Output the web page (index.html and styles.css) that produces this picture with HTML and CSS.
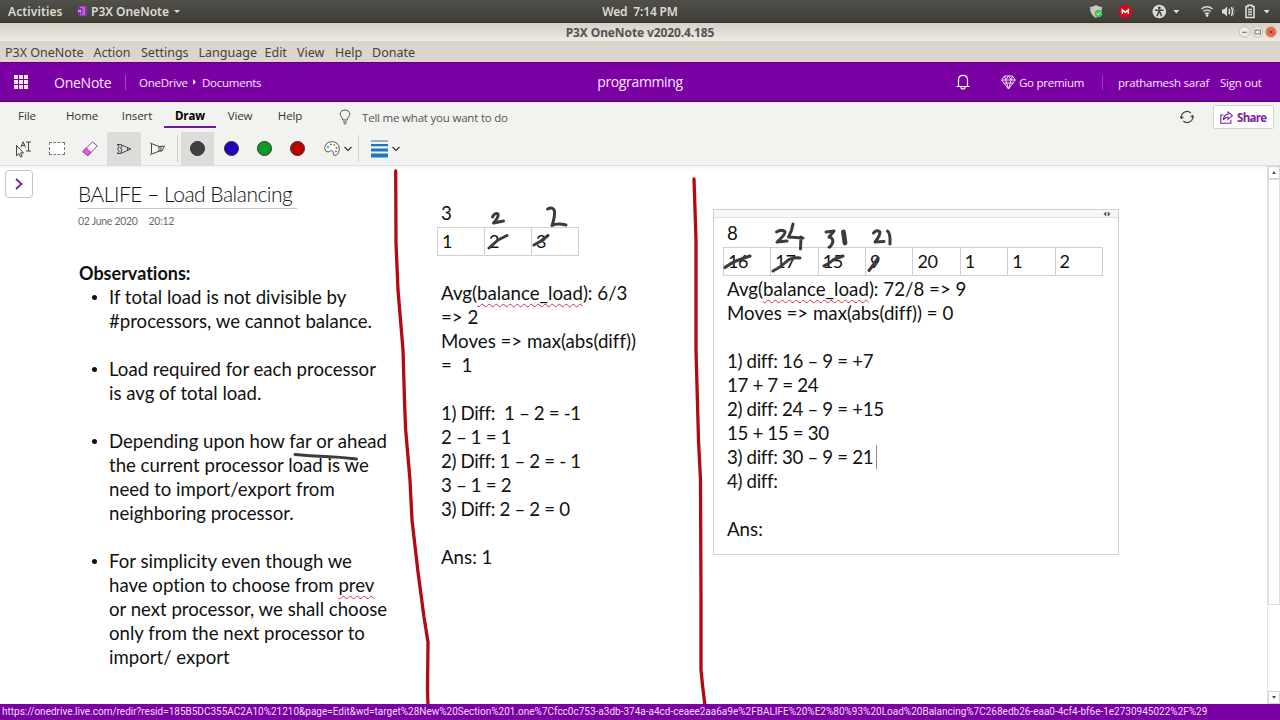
FILE: index.html
```html
<!doctype html>
<html lang="en">
  <head>
    <meta charset="UTF-8" />
    <meta name="viewport" content="width=device-width, initial-scale=1.0" />
    <title>P3X OneNote v2020.4.185</title>
    <link rel="stylesheet" href="styles.css">
  </head>
  <body>
    <!-- Desktop bar -->
    <div class="topbar">
      <div class="topbar-left">
        <span class="activities">Activities</span>
        <svg class="app-icon" width="10" height="10" viewBox="0 0 10 10">
          <rect x="2.5" y="0.5" width="7" height="9" rx="1" fill="#c95be8" />
          <path d="M8 .5h1.5v9H8z" fill="#8a2bb8" />
          <rect x="0" y="2.3" width="5.5" height="5.5" rx=".6" fill="#7c1fae" />
          <path d="M1.7 6.5V3.7l2 2.8V3.7" fill="none" stroke="#e9c8f5" stroke-width=".8" />
        </svg>
        <span class="app-name">P3X OneNote</span>
        <i class="caret"></i>
      </div>
      <div class="clock">Wed&nbsp; 7:14 PM</div>
      <div class="tray">
        <svg width="191" height="22" viewBox="1089 0 191 22">
          <path d="M1096 5q-3 2-6 2 0 8 6 11 6-3 6-11-3 0-6-2z" fill="#c9c9c4" />
          <circle cx="1098.500" cy="13.500" r="3.800" fill="#3fc455" />
          <path d="M1096.700 13.600l1.400 1.300 2.300-2.500" fill="none" stroke="#fff" />
          <circle cx="1125.300" cy="11.500" r="6.800" fill="#d9061c" />
          <path d="M1122.300 13.800v-4l3 2.600 3-2.600v4" fill="none" stroke="#fff" stroke-width="1.500" />
          <circle cx="1159.300" cy="11.500" r="6.800" fill="#dedcd7" />
          <circle cx="1159.300" cy="7.800" r="1.400" fill="#3f3e39" />
          <path d="M1155 10.200h8.600M1159.300 10v3.200M1157 16.200l1.500-4h1.600l1.500 4" fill="none" stroke="#3f3e39" stroke-width="1.400" />
          <path d="M1173.300 10h6l-3 3.500zM1263.700 10h6l-3 3.500z" fill="#dedcd7" />
          <g fill="none" stroke="#dedcd7" stroke-width="1.500">
            <path d="M1201.500 9q5.500-4.500 11 0" />
            <path d="M1203.300 11.500q3.700-3 7.400 0" />
            <path d="M1205 13.700q2-1.600 4 0" />
            <path d="M1229 8.700q1.300 2.800 0 5.600M1231.300 7.200q2.400 4.300 0 8.600" />
          </g>
          <circle cx="1207" cy="15.500" r="1.400" fill="#dedcd7" />
          <path d="M1222 9.500h2l3-3v10l-3-3h-2z" fill="#dedcd7" />
          <path d="M1233 6.500q2.500 5 0 10" fill="none" stroke="#8c8b86" />
          <path d="M1246 6.500h2v-1.300h4v1.300h2v11h-8z" fill="none" stroke="#dedcd7" stroke-width="1.600" />
          <path d="M1248 9.500h4M1248 12h4M1248 14.500h4" stroke="#dedcd7" stroke-width="1.500" />
        </svg>
      </div>
    </div>

    <!-- Window title and menu -->
    <div class="titlebar">
      <span class="window-title">P3X OneNote v2020.4.185</span>
      <svg class="window-buttons" width="40" height="14" viewBox="0 0 40 14">
        <circle cx="6.500" cy="7" r="5.300" fill="#eeeae4" stroke="#c9c3ba" />
        <circle cx="19.500" cy="7" r="5.300" fill="#eeeae4" stroke="#c9c3ba" />
        <circle cx="33" cy="7" r="5" fill="#ec6e4c" stroke="#d4735a" />
        <path d="M4 7.300h5M17 5h5.500v4H17z" fill="none" stroke="#77716a" />
        <path d="M31.300 5.300l3.400 3.400M34.700 5.300l-3.400 3.400" stroke="#7c3424" />
      </svg>
    </div>
    <div class="menubar">
      <span>P3X OneNote</span>
      <span>Action</span>
      <span>Settings</span>
      <span>Language</span>
      <span>Edit</span>
      <span>View</span>
      <span>Help</span>
      <span>Donate</span>
    </div>

    <!-- OneNote header -->
    <div class="header">
      <div class="header-left">
        <div class="waffle">
          <i></i><i></i><i></i><i></i><i></i><i></i><i></i><i></i><i></i>
        </div>
        <span class="brand">OneNote</span>
        <span class="crumb">OneDrive</span>
        <i class="crumb-arrow"></i>
        <span>Documents</span>
      </div>
      <div class="notebook">programming</div>
      <div class="header-right">
        <svg class="bell" width="14" height="16" viewBox="0 0 14 16" fill="none" stroke="#fff" stroke-width="1.200">
          <path d="M2.500 12V6q0-4.700 4.500-4.700T11.500 6v6M.6 12.500h12.800M5 13q0 2 2 2t2-2" />
        </svg>
        <svg class="gem" width="15" height="15" viewBox="0 0 15 15" fill="none" stroke="#f3dcfb">
          <path d="M3.500 1h8L14.300 5 7.500 14 .7 5zM.7 5h13.600M3.500 1l1.300 4 2.700 9 2.700-9 1.300-4M4.800 5l2.700-4 2.700 4M2.500 8h10" />
        </svg>
        <span class="premium">Go premium</span>
        <span class="user">prathamesh saraf</span>
        <span class="sign-out">Sign out</span>
      </div>
    </div>

    <!-- Ribbon -->
    <div class="ribbon">
      <div class="tabs">
        <span class="tab">File</span>
        <span class="tab">Home</span>
        <span class="tab">Insert</span>
        <span class="tab active">Draw</span>
        <span class="tab">View</span>
        <span class="tab help">Help</span>
        <svg class="bulb" width="12" height="16" viewBox="0 0 12 16" fill="none" stroke="#555">
          <path d="M3.800 11q0-1.700-1.300-3.100Q1.200 6.600 1.200 5.300 1.500 1 6 1t4.800 4.300q0 1.300-1.300 2.600Q8.200 9.300 8.200 11zM4 13h4M4.800 14.800h2.400" />
        </svg>
        <span class="tell-me">Tell me what you want to do</span>
        <svg class="sync" width="14" height="14" viewBox="0 0 14 14" fill="none" stroke="#444" stroke-width="1.100">
          <path d="M1.500 8.200A5.600 5.600 0 0 1 10.800 3M12.600 5.800A5.600 5.600 0 0 1 3.300 11M0 6.500l1.500 2 2-1.600M14 7.500l-1.500-2-2 1.600" />
        </svg>
        <div class="share">
          <svg width="13" height="13" viewBox="0 0 13 13" fill="none" stroke="#7a1fa2" stroke-width="1.100">
            <path d="M3.500 4H.8v8.300h10V9M8 1l4.300 3.700L8 8.300V6.200Q4.800 6 3.300 9 3.500 3.700 8 3.200z" />
          </svg>
          <span>Share</span>
        </div>
      </div>
      <div class="tools">
        <span class="tool">
          <svg width="17" height="18" viewBox="0 0 17 18" fill="none" stroke="#444">
            <path d="M1.500 5.500v10.300l2.400-2.200L5.500 17l1.700-.8-1.600-3.300h3zM5.800 7.500l2.400-5.700 2.300 5.700M6.700 5.500h3M11 2h5M13.500 2v9M11 11h5" />
          </svg>
        </span>
        <span class="tool"><i class="lasso"></i></span>
        <span class="tool">
          <svg width="16" height="16" viewBox="0 0 16 16" fill="#fff" stroke="#b02fc0">
            <path d="M.8 10.500L10.500 1l4.700 3.800L6 14.800z" />
            <path d="M.8 10.500l3.500-3.400L9 11.500l-3 3.300z" fill="#dc62dc" />
          </svg>
        </span>
        <span class="tool active">
          <svg width="16" height="12" viewBox="0 0 16 12" fill="none" stroke="#444">
            <path d="M1 1.500h3.500L14.800 6 4.500 10.500H1l2.200-2L1.700 6l1.500-2.500zM4.500 1.500l1.700 2L4 5.300l2 1.200-1.500 4M11.500 4.500v3" />
          </svg>
        </span>
        <span class="tool">
          <svg width="17" height="14" viewBox="0 0 17 14" fill="none" stroke="#444">
            <path d="M1 .7q1 0 1.500 1.300v9.700Q2 13 1 13M2.500 1.500l7.500 3v4.700l-7.500 3M10 4.500l5.500-.3L13 9l-3 .2M12.200 4.500L11.700 9" />
          </svg>
        </span>
        <i class="divider"></i>
        <span class="tool active"><i class="dot"></i></span>
        <span class="tool"><i class="dot blue"></i></span>
        <span class="tool"><i class="dot green"></i></span>
        <span class="tool"><i class="dot red"></i></span>
        <svg class="palette" width="16" height="15" viewBox="0 0 16 15" fill="none">
          <path d="M7.500.7Q14.800 1 15.200 7q0 6-3.200 7.200-3 .6-2.700-1.500Q9.500 9 6.500 9.800 4 12 2 10.300.5 8.700.8 6.500 2 .8 7.500.7z" fill="#fff" stroke="#555" />
          <circle cx="4" cy="6" r="1" fill="#2f7ed0" />
          <circle cx="6.800" cy="3.500" r="1" fill="#25a05a" />
          <circle cx="10.300" cy="4" r="1" fill="#d98425" />
          <circle cx="12.500" cy="7" r="1" fill="#d24b4b" />
          <circle cx="12" cy="10.500" r="1" fill="#8945b0" />
        </svg>
        <svg class="chevron" width="8" height="6" viewBox="0 0 8 6"><path d="M.5 1L4 4.500 7.500 1" fill="none" stroke="#333" stroke-width="1.100" /></svg>
        <i class="divider wide"></i>
        <svg class="weights" width="17" height="18" viewBox="0 0 17 18" fill="#2176c4">
          <path d="M0 .5h17v1H0zM0 4h17v2.200H0zM0 8.500h17v3H0zM0 13.500h17v4H0z" />
        </svg>
        <svg class="chevron" width="8" height="6" viewBox="0 0 8 6"><path d="M.5 1L4 4.500 7.500 1" fill="none" stroke="#333" stroke-width="1.100" /></svg>
      </div>
    </div>

    <!-- Page canvas -->
    <div class="canvas">
      <div class="nav-toggle">
        <svg width="8" height="12" viewBox="0 0 8 12"><path d="M1 1l5.500 5L1 11" fill="none" stroke="#6d1a9c" stroke-width="1.700" /></svg>
      </div>

      <div class="note page-title">
        <h1>BALIFE – Load Balancing</h1>
        <p><span>02 June 2020</span><span>20:12</span></p>
      </div>

      <div class="note observations">
        <h2>Observations:</h2>
        <ul>
          <li>If total load is not divisible by<br />#processors, we cannot balance.</li>
          <li>Load required for each processor<br />is avg of total load.</li>
          <li>Depending upon how far or ahead<br />the current processor load is we<br />need to import/export from<br />neighboring processor.</li>
          <li>For simplicity even though we<br />have option to choose from <u>prev</u><br />or next processor, we shall choose<br />only from the next processor to<br />import/ export</li>
        </ul>
      </div>

      <div class="note example-one">
        <p>3</p>
        <table>
          <tr><td>1</td><td>2</td><td>3</td></tr>
        </table>
        <p class="calc">Avg(<u>balance_load</u>): 6/3<br />=&gt; 2<br />Moves =&gt; max(abs(diff))<br />=&nbsp; 1</p>
        <p class="sums">1) Diff:&nbsp; 1 – 2 = -1<br />2 – 1 = 1<br />2) Diff: 1 – 2 = - 1<br />3 – 1 = 2<br />3) Diff: 2 – 2 = 0</p>
        <p>Ans: 1</p>
      </div>

      <div class="note example-two">
        <div class="note-handle">
          <svg width="8" height="6" viewBox="0 0 8 6"><path d="M3.300.5v5L.5 3zM4.700.5v5L7.500 3z" fill="#555" /></svg>
        </div>
        <p class="count">8</p>
        <table>
          <tr><td>16</td><td>17</td><td>15</td><td>9</td><td>20</td><td>1</td><td>1</td><td>2</td></tr>
        </table>
        <p>Avg(<u>balance_load</u>): 72/8 =&gt; 9<br />Moves =&gt; max(abs(diff)) = 0</p>
        <p class="sums">1) diff: 16 – 9 = +7<br />17 + 7 = 24<br />2) diff: 24 – 9 = +15<br />15 + 15 = 30<br />3) diff: 30 – 9 = 21<i class="cursor"></i><br />4) diff:</p>
        <p>Ans:</p>
      </div>

      <!-- Pen strokes -->
      <svg class="ink" width="1280" height="539" viewBox="0 165 1280 539">
        <g class="ink-red">
          <path d="M395.700 171L396 243 398 290 403 350 404.500 400 405.500 428 410 480 412 520 418 572 424 617 428 642 427.500 690 428 706" />
          <path d="M694 179L696 240 696 350 698.500 440 700.500 480 701 600 701 670 702.500 685 705 706" />
        </g>
        <g class="ink-dark">
          <path d="M295 454.500Q310 456 325 456.500T356.500 459" />
          <path d="M492.500 217Q495 212 498 214 499 217 493.500 223L503.500 221" />
          <path d="M547.500 209Q553 206.500 554.500 211 555 217 552 225.500 557 223 566 225" />
          <path d="M489 248L498 240 507 235.500M534 245L541 241 548 235.500" />
          <path d="M776.500 232Q781 229 785 231.500 786 234 777 242L787 241M793 224Q792 231 788.500 237L803 238M801 237L800.500 249" />
          <path d="M826 232L834 231 829 237Q834 238 832.500 243 830 248 829 247" />
          <path class="thick" d="M843.500 232L845 243" />
          <path d="M873.500 233Q877 229 880 232 880 236 875 242L884 241.500M887.500 231Q890.500 233 890 244" />
          <path d="M725 267.500Q731 263 736 261T750 256M773 271Q781 267 786 262T800 258M824 266Q829 264 833 260L843 256M869 270.500L874 264 878 258" />
        </g>
      </svg>

      <div class="scrollbar">
        <span class="scroll-button"><i class="up"></i></span>
        <span class="thumb"></span>
        <span class="scroll-button bottom"><i class="down"></i></span>
      </div>
    </div>

    <div class="status">https://onedrive.live.com/redir?resid=185B5DC355AC2A10%21210&amp;page=Edit&amp;wd=target%28New%20Section%201.one%7Cfcc0c753-a3db-374a-a4cd-ceaee2aa6a9e%2FBALIFE%20%E2%80%93%20Load%20Balancing%7C268edb26-eaa0-4cf4-bf6e-1e2730945022%2F%29</div>
  </body>
</html>
```
FILE: styles.css
```css
* {
  box-sizing: border-box;
}
body {
  margin: 0;
  width: 1280px;
  height: 720px;
  overflow: hidden;
  display: flex;
  flex-direction: column;
  background: #fff;
  font-family: 'Open Sans', 'Noto Sans', sans-serif;
  white-space: nowrap;
}
svg {
  display: block;
  flex: none;
}
i {
  flex: none;
}

/* Desktop bar */
.topbar {
  height: 23px;
  flex: none;
  display: grid;
  grid-template-columns: 1fr auto 1fr;
  align-items: center;
  background: linear-gradient(#504f49, #3e3d38);
  border-bottom: 1px solid #35342f;
  color: #dfdbd2;
  font-family: 'Noto Sans', sans-serif;
  font-size: 12px;
  font-weight: 600;
}
.topbar-left {
  display: flex;
  align-items: center;
  padding-left: 8px;
}
.activities {
  width: 69px;
  letter-spacing: 0.1px;
}
.app-icon {
  margin-right: 4px;
}
.app-name {
  width: 83px;
}
.caret {
  border: 3px solid transparent;
  border-top: 3px solid #dfdbd2;
  border-bottom: 0;
}
.clock {
  letter-spacing: -0.15px;
}
.tray {
  justify-self: end;
}

/* Window title and menu */
.titlebar {
  height: 18px;
  flex: none;
  display: grid;
  grid-template-columns: 1fr auto 1fr;
  align-items: center;
  background: linear-gradient(#d5cfc7, #eeebe6);
  color: #57524c;
  font-family: 'Noto Sans', sans-serif;
  font-size: 12px;
  font-weight: 700;
}
.window-title {
  grid-column: 2;
  letter-spacing: -0.12px;
}
.window-buttons {
  justify-self: end;
  margin-right: 2px;
}
.menubar {
  height: 21px;
  flex: none;
  display: grid;
  grid-template-columns: 88.500px 47.500px 57.500px 66px 32.500px 38px 37px auto;
  align-items: center;
  padding: 2px 0 0 5px;
  background: #dcd5cb;
  color: #45423e;
  font-family: 'Noto Sans', sans-serif;
  font-size: 12.500px;
}

/* OneNote header */
.header {
  height: 40px;
  flex: none;
  display: grid;
  grid-template-columns: 1fr auto 1fr;
  align-items: center;
  background: #7a00a3;
  border-top: 1px solid #58007a;
  border-bottom: 1px solid #58007a;
  color: #f8e8ff;
  font-size: 11.500px;
  letter-spacing: -0.25px;
}
.header-left,
.header-right {
  display: flex;
  align-items: center;
}
.waffle {
  display: grid;
  grid-template-columns: repeat(3, 4px);
  gap: 1px;
  margin-left: 14px;
}
.waffle i {
  height: 4px;
  background: #f8e8ff;
}
.brand {
  width: 71px;
  margin-left: 26px;
  font-size: 14px;
}
.crumb {
  width: 68px;
  padding-left: 13px;
  border-left: 1px solid #a14bc0;
}
.crumb-arrow {
  border: 3px solid transparent;
  border-left: 3px solid #f8e8ff;
  border-right: 0;
  margin-right: 6px;
}
.notebook {
  margin-top: -2px;
  font-size: 14px;
  letter-spacing: -0.35px;
}
.header-right {
  justify-content: flex-end;
  padding-right: 17px;
}
.bell {
  margin-right: 31px;
}
.gem {
  margin-right: 3px;
}
.premium {
  width: 83px;
}
.user {
  width: 118px;
  padding-left: 15px;
  border-left: 1px solid #963eb8;
}
.sign-out {
  width: 43px;
}

/* Ribbon */
.ribbon {
  height: 64px;
  flex: none;
  background: #f2f2ee;
  border-bottom: 1px solid #deded9;
}
.tabs {
  height: 30px;
  display: flex;
  align-items: center;
  color: #333;
  font-size: 11.500px;
  letter-spacing: -0.1px;
}
.tab {
  align-self: flex-start;
  width: 50px;
  height: 24px;
  margin-top: 2px;
  margin-left: 5px;
  line-height: 23px;
  text-align: center;
}
.tab:first-child {
  margin-left: 2px;
}
.tab.active {
  width: 52px;
  margin-left: 2px;
  margin-right: -6px;
  border-bottom: 2px solid #6b1a9a;
  color: #000;
  font-weight: 700;
}
.tab.help {
  margin-left: 0;
}
.bulb {
  margin-left: 24px;
}
.tell-me {
  margin-left: 11px;
  color: #555;
  letter-spacing: -0.2px;
}
.sync {
  margin-left: auto;
}
.share {
  width: 61px;
  height: 24px;
  display: flex;
  align-items: center;
  gap: 4px;
  margin: 0 6px 0 19px;
  padding-left: 6px;
  background: #fff;
  border: 1px solid #d2d2d2;
  border-radius: 2px;
  color: #7a1fa2;
  font-weight: 700;
  letter-spacing: -0.7px;
}
.tools {
  height: 33px;
  display: flex;
  align-items: center;
  padding-left: 7px;
}
.tool {
  width: 33.400px;
  height: 33px;
  display: flex;
  align-items: center;
  justify-content: center;
}
.tool.active {
  background: #dcdcdb;
}
.lasso {
  width: 16px;
  height: 13px;
  background: #fff;
  border: 1px dashed #777;
}
.divider {
  width: 1px;
  height: 27px;
  margin: 0 3px;
  background: #cfcfcb;
}
.divider.wide {
  margin: 0 12px 0 6px;
}
.dot {
  width: 15px;
  height: 15px;
  border: 1px solid #333;
  border-radius: 50%;
  background: #404040;
}
.dot.blue {
  background: #2400b8;
}
.dot.green {
  background: #0d9b28;
}
.dot.red {
  background: #bd0000;
}
.palette {
  margin: 0 4px 0 9px;
}
.weights {
  margin-right: 4px;
}

/* Page canvas */
.canvas {
  position: relative;
  height: 538px;
  flex: none;
  background: linear-gradient(#f4f4f2, #fff 4px);
}
.nav-toggle {
  position: absolute;
  left: 5px;
  top: 4px;
  width: 28px;
  height: 28px;
  display: flex;
  align-items: center;
  justify-content: center;
  border: 1px solid #c5c5c5;
  border-radius: 4px;
  background: #fff;
}
.note {
  position: absolute;
  color: #111;
  font-family: Lato, sans-serif;
  font-size: 18.700px;
  font-variant-ligatures: none;
  line-height: 24px;
}
.note h1,
.note h2,
.note p,
.note ul {
  margin: 0;
}
.note p + p {
  margin-top: 24px;
}
.note u {
  text-decoration: underline wavy #d0304a 1px;
  text-decoration-skip-ink: none;
  text-underline-offset: 3px;
}
.note .sums {
  letter-spacing: -0.35px;
}
.page-title {
  left: 78px;
  top: 14px;
}
.page-title h1 {
  width: 219px;
  height: 29px;
  border-bottom: 1px solid #c8c8c8;
  font-size: 21px;
  font-weight: 300;
  letter-spacing: -0.5px;
  line-height: 28px;
}
.page-title p {
  display: flex;
  gap: 11px;
  color: #6a6a6a;
  font-size: 10.500px;
  letter-spacing: -0.3px;
}
.observations {
  left: 79px;
  top: 95px;
  font-size: 18.600px;
}
.observations h2 {
  font-size: 18px;
  font-weight: 700;
}
.observations ul {
  padding: 0 0 0 30px;
  list-style: none;
}
.observations li {
  margin-bottom: 24px;
}
.observations li::before {
  content: '';
  float: left;
  width: 5px;
  height: 5px;
  margin: 10px 0 0 -17px;
  border-radius: 50%;
  background: #111;
}
.note table {
  border-collapse: collapse;
  table-layout: fixed;
}
.note td {
  width: 47px;
  height: 28px;
  padding: 0 0 2px 4px;
  border: 1px solid #cfcfcf;
  font-size: 18px;
  letter-spacing: -0.4px;
}
.example-one {
  left: 441px;
  top: 35px;
}
.example-one table {
  width: 142px;
  margin: 2px 0 0 -4px;
}
.example-one .calc {
  margin-top: 25px;
}
.example-two {
  left: 713px;
  top: 43px;
  width: 406px;
  height: 346px;
  padding-left: 13px;
  border: 1px solid #d0d0d0;
}
.note-handle {
  height: 8px;
  display: flex;
  align-items: center;
  justify-content: flex-end;
  margin-left: -13px;
  padding-right: 7px;
  background: #f7f7f7;
  border-bottom: 1px solid #e2e2e2;
}
.example-two .count {
  margin-top: 3px;
}
.example-two table {
  width: 380px;
  margin: 2px 0 1px -4px;
}
.cursor {
  display: inline-block;
  width: 1px;
  height: 24px;
  margin-left: 3px;
  background: #888;
  vertical-align: top;
}
.ink {
  position: absolute;
  left: 0;
  top: -1px;
  fill: none;
  stroke-linecap: round;
  stroke-linejoin: round;
  pointer-events: none;
}
.ink-red {
  stroke: #b50912;
  stroke-width: 3.300;
}
.ink-dark {
  stroke: #3c3c3c;
  stroke-width: 3;
}
.ink-dark .thick {
  stroke-width: 4.800;
}
.scrollbar {
  position: absolute;
  top: 0;
  right: 0;
  width: 13px;
  height: 538px;
  display: flex;
  flex-direction: column;
  border-left: 1px solid #e2e2e2;
}
.scroll-button {
  height: 13px;
  display: flex;
  align-items: center;
  justify-content: center;
  border: 1px solid #d5d5d5;
}
.scroll-button.bottom {
  margin-top: auto;
}
.thumb {
  height: 426px;
  border: 1px solid #dedede;
}
.up,
.down {
  border: 2.500px solid transparent;
  border-top: 0;
  border-bottom: 3px solid #555;
}
.down {
  border-top: 3px solid #555;
  border-bottom: 0;
}

.status {
  height: 16px;
  flex: none;
  padding-left: 2px;
  background: #7a00a3;
  color: #f3dcfb;
  font-family: Roboto, sans-serif;
  font-size: 10px;
  line-height: 16px;
}
```
